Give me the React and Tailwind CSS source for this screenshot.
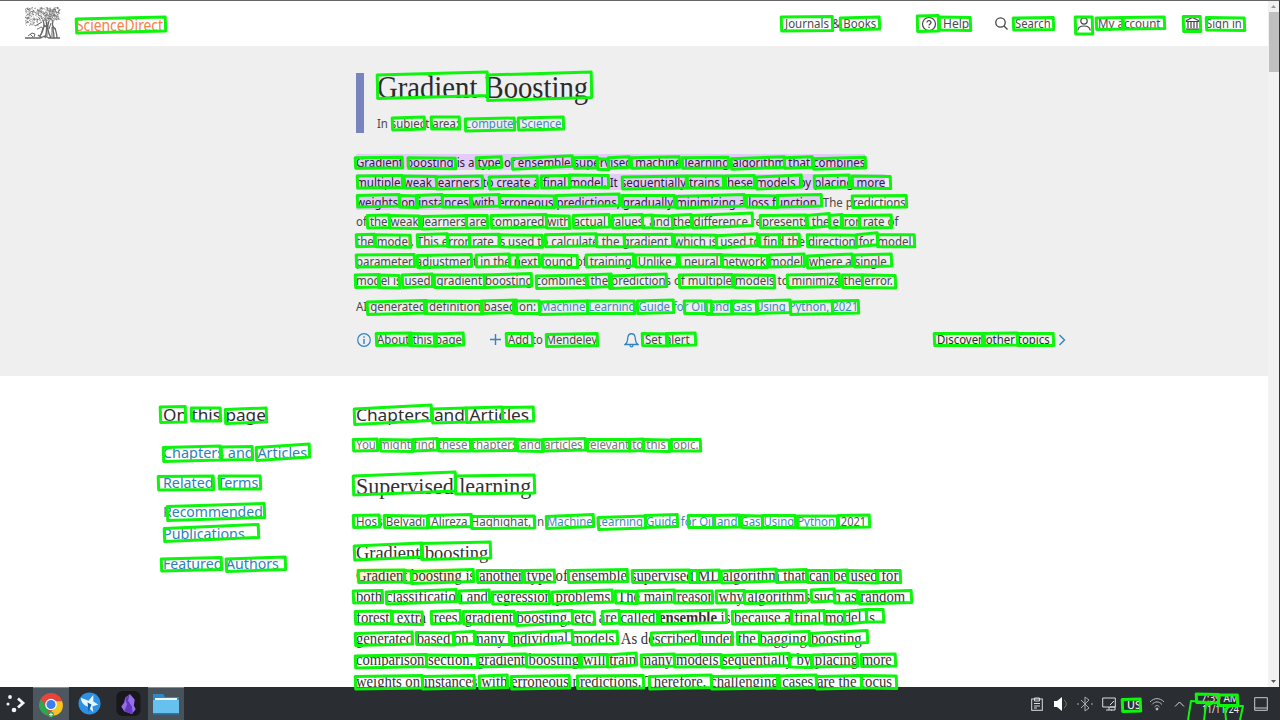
import React, { useLayoutEffect, useRef, useState } from "react";

const SANS = "font-['Noto_Sans','Open_Sans',sans-serif]";
const SERIF = "font-['Liberation_Serif',serif]";

// Text set to an exact measure: the natural width is read, then condensed or expanded.
function Fit({ w, className = "", children }) {
  const ref = useRef(null);
  const [k, setK] = useState(1);
  useLayoutEffect(() => {
    setK(w / ref.current.offsetWidth);
  }, [w]);
  return (
    <span className={"flex shrink-0 items-center whitespace-nowrap " + className} style={{ width: w }}>
      <span ref={ref} className="block shrink-0 origin-left whitespace-pre" style={{ transform: `scaleX(${k})` }}>
        {children}
      </span>
    </span>
  );
}

// Word frames: [left, right, top-left y, height, rise towards the right]
const row = (y, h, list) =>
  list.map(([a, b, dy = 0, t], i) => [a, b, y + dy, h, t === undefined ? [0.5, -0.5, 1, 0][i % 4] : t]);

const FRAMES = [
  [77, 166, 19, 14, 2],
  [782, 833, 17, 14, 0.5], [841, 880, 18, 12, 1], [918, 939, 16, 15.5, 0.5], [940, 971, 17, 13, -0.5],
  [1014, 1054, 18, 12, 0.5], [1076, 1093, 17, 17, 0], [1097, 1124, 18, 11.5, 0.5], [1123, 1165, 17.5, 11.5, 0.5],
  [1184, 1201, 16.5, 15, 0], [1207, 1245, 17.5, 12.5, -0.5],
  [378, 488, 75, 23.5, 3], [488, 592, 75, 25.5, 3],
  [393, 425, 118, 12, 1], [432, 460, 117, 12, 0], [466, 515, 119, 12, 1], [519, 564, 118, 12, 1],
  ...row(157.7, 10.5, [[356, 403], [409, 456], [477, 502], [513, 573, 1, 3], [575, 598], [598, 609, 1], [609, 630], [632, 680, 0, 1], [683, 729], [732, 785, 1, 2], [785, 813], [814, 866, 1, 1.5]]),
  ...row(176, 12, [[358, 403], [405, 437], [437, 483, 1, 1], [490, 538, 1, 1], [542, 570], [570, 609, -1], [623, 687, 1, 1], [688, 724], [726, 755], [757, 802, 1, 2], [815, 850, 0, 1], [853, 891, 0, -0.5]]),
  ...row(195.5, 11.5, [[358, 400, 0, 1], [400, 418], [417, 443], [443, 471], [472, 500, 0, 1], [500, 555], [557, 620, 0, 1.5], [623, 675], [677, 745, 1, 2], [747, 778], [778, 822], [853, 907, 0.5, 0.5]]),
  ...row(215.5, 12.5, [[368, 390], [390, 420], [422, 467, 1, 1], [467, 488], [492, 547, 0, 1], [547, 570], [574, 610], [613, 643, 0, 1], [643, 653], [653, 673], [673, 692], [693, 753, 0, 2.5], [761, 807], [808, 830, 0, 2], [830, 843], [842, 860], [860, 892]]),
  ...row(234.8, 12, [[357, 375], [376, 411, 0, -0.5], [418, 448], [448, 470], [470, 500], [500, 543], [546, 597], [597, 625], [625, 673], [675, 717], [717, 758, 1, 2], [760, 780], [780, 800], [808, 857], [857, 878, 0, 2], [878, 915]]),
  ...row(255, 12, [[357, 415], [418, 472, 0.5, 1], [477, 510], [510, 518], [518, 540], [543, 578], [587, 634, 0, 1], [636, 678], [680, 722], [723, 768], [770, 805], [808, 853, 1, 2], [855, 892, 0, 1]]),
  ...row(275, 12.5, [[356, 380], [379, 400], [403, 433], [435, 485], [485, 532, 0, 1.5], [537, 587, 1, 1], [588, 612], [610, 667, 1, 2], [680, 733], [735, 775], [788, 840, 0, 1], [843, 863], [863, 896, 0, -0.5]]),
  ...row(301, 12.5, [[368, 427, 1, 1.5], [425, 483], [482, 517], [514, 540], [540, 588, 1, 1], [588, 635, 0, 0], [638, 674], [685, 712], [707, 733, 1], [732, 758], [757, 791], [791, 833, 1, 1], [833, 859]]),
  ...row(333.5, 12, [[377, 412], [410, 437], [435, 464, 0.5], [507, 533], [547, 598, 1, 1], [643, 668], [667, 696, 0, 0.5], [935, 985, 0, 0], [983, 1018], [1018, 1054, 0, 0]]),
  [161, 186, 407, 15.5, 0.5], [192, 221, 408, 13, 0], [226, 267, 409.5, 14, 1.5],
  [164, 221, 447.5, 14, 1.5], [222, 253, 447, 13, 0.5], [257, 310, 447.5, 13, 3.5],
  [159, 214, 476.5, 13.5, 0.5], [220, 261, 476, 13, 0],
  [168, 265, 506.5, 14, 3], [165, 259, 528.5, 13, 4],
  [162, 222, 559, 12, 1.5], [227, 286, 559, 12.5, 2],
  [355, 432, 409, 15.5, 4], [433, 467, 409, 14, 1], [467, 503, 408, 14.5, 1], [503, 534, 407.5, 14, 0.5],
  ...row(439.5, 11.5, [[354, 378, 0, 0.5], [381, 413], [414, 438], [439, 471], [473, 516], [518, 543], [544, 586], [588, 630], [630, 644], [644, 670], [672, 701, 0, 0]]),
  [354, 456, 476, 19, 4], [456, 535, 476, 18, 1],
  ...row(515.5, 12, [[354, 380], [385, 428], [429, 472], [472, 535, 1, 0.5], [547, 594, 1, 2], [599, 646, 2, 1.5], [646, 678], [689, 715], [715, 740], [742, 763], [763, 796, 0, 0], [798, 838, 0.5], [839, 870, 0, 0.5]]),
  [355, 423, 546, 14, 3], [422, 491, 543.5, 16, 1.5],
  ...row(570.5, 12, [[359, 405], [405, 412], [412, 474, 1, 2], [478, 523], [525, 555], [569, 628, 0, 1], [633, 690, 0, 0.5], [690, 698], [698, 720], [722, 777, 0.5, 2], [777, 807], [808, 832], [832, 848], [848, 878], [878, 901, 0, 0]]),
  ...row(591, 12, [[354, 383], [387, 457, 1, 2.5], [460, 490], [493, 550, 1, 0.5], [553, 613, 1, 2], [616, 637], [638, 675], [675, 713], [717, 745], [745, 807, 0.5, 1], [812, 835, -1], [835, 858], [860, 912, 1, 1.5]]),
  ...row(611.5, 12.5, [[356, 392], [393, 423], [432, 461], [464, 515], [517, 573, 1.5, 2.5], [573, 595], [603, 620, 0, 1], [620, 658], [660, 727, 0, 1.5], [733, 792, 0, 1], [792, 825], [825, 845], [845, 867, 0, 2], [867, 884, -2, 0]]),
  ...row(632.5, 12, [[356, 413, 1, 1.5], [417, 455], [454, 475], [476, 510], [512, 573, 1, 3], [573, 618, 0, 1], [652, 700, 0.5, 1.5], [700, 733], [738, 760], [760, 810, 0.5, 1.5], [810, 868, 1, 3]]),
  ...row(655, 12, [[356, 427, 1, 1.5], [427, 478], [478, 527, 0, 1], [527, 582], [580, 608], [608, 637, 0, 2], [642, 675], [675, 722, 0, 0.5], [722, 790, 0.5, 2], [790, 812], [813, 858], [862, 896, -0.5, 0.5]]),
  ...row(676, 12.5, [[356, 423, 0.5, 1], [423, 475, 0.5, 1], [480, 508], [512, 570, 0.5, 1], [578, 644, 0, 0.5], [650, 712, 0.5, 1.5], [712, 780, 0.5, 1], [778, 817, 0, 1], [817, 862, 0.5, 1], [862, 897, -0.5, -0.5]]),
  [1123, 1141, 699.5, 12, 0.5], [1197, 1219, 694, 8.5, -0.5], [1219, 1238, 695, 10.5, 0],
];

function Frames() {
  return (
    <svg className="pointer-events-none absolute inset-0" width="1280" height="720" fill="none" stroke="#0df50d" strokeWidth="3" strokeLinejoin="round">
      <g transform="translate(-0.8 0)">
        {FRAMES.map(([a, b, y, h, t], i) => (
          <polygon key={i} points={`${a},${y} ${b},${y - t} ${b + 0.5},${y + h - t} ${a + 0.5},${y + h}`} />
        ))}
      </g>
      <path strokeWidth="2" d="M1188 720L1191 701L1206 702M1204 720L1206 705L1212 704M1226 720L1225 709L1231 706L1243 706L1240 720" />
    </svg>
  );
}

// Engraved tree: short hatching strokes scattered by a fixed sequence
function TreeLogo() {
  let s = 7;
  const r = () => (s = (s * 16807) % 2147483647) / 2147483647;
  let leaves = "";
  for (let i = 0; i < 400; i++) {
    const x = r() * 34 + 0.5, y = r() * (x > 14 ? 13 : 18) + 0.5;
    leaves += `M${x.toFixed(1)} ${y.toFixed(1)}l${(r() * 3 - 1.5).toFixed(1)} ${(r() * 3 - 1.5).toFixed(1)}`;
  }
  return (
    <svg width="36" height="33" viewBox="0 0 36 33" fill="none" stroke="#666">
      <path d={leaves} strokeWidth=".7" />
      <path d="M18 13c2 5 1 10-3 16M21 13c1 6 1 12-1 18M24 14c-2 5-2 10 2 17M28 13c-2 7 1 9 1 18M30 21c1 4 2 6 2 10M0 31h15l5-2 4 2h11M13 28l4 3M19 18l4 3M27 18l3 4" strokeWidth="1.3" />
      <path d="M3 29l4-3 3 1-1 3M5 27l3 3M12 22c2 0 3-2 5-2M22 15v14M26 16l-2 6M10 19l7-4M27 20v10M18 20l-2 8" strokeWidth="1" />
    </svg>
  );
}

const P = "bg-[#e3ccf8] inline-block leading-[16px] text-[#2e2038]";
const DEFINITION = [
  [509, <span className={P}>Gradient boosting is a type of ensemble supervised machine learning algorithm that combines</span>],
  [529, <span className={P}>multiple weak learners to create a final model. It sequentially trains these models by placing more</span>],
  [550, <><span className={P}>weights on instances with erroneous predictions, gradually minimizing a loss function.</span> The predictions</>],
  [542, "of the weak learners are compared with actual values, and the difference represents the error rate of"],
  [555, "the model. This error rate is used to calculate the gradient, which is used to find the direction for model"],
  [531, "parameter adjustment in the next round of training. Unlike a neural network model, where a single"],
  [537, "model is used, gradient boosting combines the predictions of multiple models to minimize the error."],
];
const ARTICLE = [
  [542, <><span className="inline-block bg-[#fff5cf] leading-[16px]">Gradient boosting</span> is another type of ensemble supervised ML algorithm that can be used for</>],
  [549, "both classification and regression problems. The main reason why algorithms such as random"],
  [519, <>forest, extra trees, gradient boosting, etc. are called <b>ensemble</b> is because a final model is</>],
  [506, "generated based on many individual models. As described under the bagging/boosting"],
  [536, "comparison section, gradient boosting will train many models sequentially by placing more"],
  [536, "weights on instances with erroneous predictions. Therefore, challenging cases are the focus"],
];

function NavItem({ w, children, icon, className = "" }) {
  return (
    <div className={"flex items-center " + className}>
      {icon}
      <Fit w={w} className="pt-px">{children}</Fit>
    </div>
  );
}

function Header() {
  return (
    <header className="flex h-[46px] items-center border-t border-[#666] bg-white pl-[25px] text-[12.5px] text-[#4a4a4a]">
      <TreeLogo />
      <Fit w={87} className="ml-[15px] mt-[3px] text-[16.5px] text-[#f58045]">ScienceDirect</Fit>
      <nav className="ml-[622px] flex items-center">
        <NavItem w={91}>Journals &amp; Books</NavItem>
        <NavItem w={26} className="ml-[45px]" icon={
          <svg className="mr-[6px]" width="16" height="16" viewBox="0 0 16 16" fill="none" stroke="#444" strokeWidth="1.2"><circle cx="8" cy="8" r="6.5" /><path d="M5.9 6.6c0-2.7 4.2-2.5 4.1 0 0 1.3-2 1.4-2 3M8 10.8v1.2" /></svg>
        }>Help</NavItem>
        <NavItem w={36} className="ml-[25px]" icon={
          <svg className="mr-[6px]" width="15" height="15" viewBox="0 0 15 15" fill="none" stroke="#444" strokeWidth="1.3"><circle cx="6.5" cy="6.5" r="4.7" /><path d="M10 10l3.5 3.5" /></svg>
        }>Search</NavItem>
        <NavItem w={63} className="ml-[25px]" icon={
          <svg className="mr-[6px]" width="16" height="16" viewBox="0 0 16 16" fill="none" stroke="#444" strokeWidth="1.2"><circle cx="8" cy="5" r="3.2" /><path d="M1.8 14.5c.5-6 11.9-6 12.4 0" /></svg>
        }>My account</NavItem>
        <NavItem w={36} className="ml-[24px]" icon={
          <svg className="mr-[6px]" width="15" height="15" viewBox="0 0 15 15" fill="none" stroke="#444" strokeWidth="1.2"><path d="M1.5 4.5L7.5 1.5l6 3v1h-12zM3 6v6M6 6v6M9 6v6M12 6v6M1 13.2h13" /></svg>
        }>Sign in</NavItem>
      </nav>
    </header>
  );
}

function Hero() {
  return (
    <section className="h-[330px] bg-[#efefef] pl-[356px] pt-[27px] text-[#484848]">
      <div className="h-[60px] border-l-[8px] border-[#7884bd] pl-[13px]">
        <Fit w={211} className={"h-[29px] text-[31px] leading-[29px] text-[#2b2b2b] " + SERIF}>Gradient Boosting</Fit>
        <div className="mt-[13px] flex h-[18px] items-center text-[12.5px]">
          <Fit w={82}>In subject area:</Fit>
          <Fit w={97} className="ml-[5px] text-[#3f86bd]">Computer Science</Fit>
        </div>
      </div>
      <div className="mt-[20px] text-[12.7px]">
        {DEFINITION.map(([w, t], i) => <Fit key={i} w={w} className="h-[19.67px]">{t}</Fit>)}
      </div>
      <div className="mt-[6.3px] flex h-[20px] items-center text-[12.5px]">
        <Fit w={180}>AI generated definition based on:</Fit>
        <Fit w={318} className="ml-[4px] text-[#3f86bd]">Machine Learning Guide for Oil and Gas Using Python, 2021</Fit>
      </div>
      <div className="mt-[13px] flex h-[20px] items-center text-[12.5px]">
        <svg width="16" height="16" viewBox="0 0 16 16" fill="none" stroke="#3184c0" strokeWidth="1.2"><circle cx="8" cy="8" r="6.3" /><path d="M8 4.2v1.5M8 7v5" strokeWidth="1.4" /></svg>
        <Fit w={85} className="ml-[5px]">About this page</Fit>
        <svg className="ml-[27px]" width="13" height="13" viewBox="0 0 13 13" stroke="#3184c0" strokeWidth="1.4"><path d="M6.5 1v11M1 6.5h11" /></svg>
        <Fit w={89} className="ml-[6px]">Add to Mendeley</Fit>
        <svg className="ml-[27px]" width="15" height="16" viewBox="0 0 15 16" fill="none" stroke="#3184c0" strokeWidth="1.3"><path d="M1 12.5c3-2 2.5-4 2.8-7C4.5.5 10.5.5 11.2 5.5c.3 3-.2 5 2.8 7zM6 13c0 2.500 3 2.500 3 0" /></svg>
        <Fit w={45} className="ml-[6px]">Set alert</Fit>
        <Fit w={113} className="ml-[247px] text-[#2d2d2d]">Discover other topics</Fit>
        <svg className="ml-[8px]" width="9" height="14" viewBox="0 0 9 14" fill="none" stroke="#3184c0" strokeWidth="1.4"><path d="M1.5 2l5 5-5 5" /></svg>
      </div>
    </section>
  );
}

function Sidebar() {
  return (
    <aside className="w-[193px] shrink-0 text-[15px] text-[#2e7fb8]">
      <Fit w={103} className="mt-[28px] h-[22px] text-[17px] text-[#2e2e2e]">On this page</Fit>
      <Fit w={144} className="mt-[15px] h-[22px]">Chapters and Articles</Fit>
      <Fit w={95} className="mt-[8px] h-[22px]">Related Terms</Fit>
      <Fit w={100} className="mt-[7px] h-[22px]">Recommended</Fit>
      <Fit w={82} className="h-[22px]">Publications</Fit>
      <Fit w={116} className="mt-[8px] h-[22px]">Featured Authors</Fit>
    </aside>
  );
}

function Articles() {
  return (
    <main className="text-[#333]">
      <Fit w={173} className="mt-[28px] h-[22px] text-[17px] text-[#2e2e2e]">Chapters and Articles</Fit>
      <Fit w={343} className="mt-[9px] h-[20px] text-[12.5px] text-[#757575]">You might find these chapters and articles relevant to this topic.</Fit>
      <Fit w={175} className={"mt-[17px] h-[28px] text-[24px] " + SERIF}>Supervised learning</Fit>
      <div className="mt-[12px] flex h-[20px] items-center text-[12.5px]">
        <Fit w={188} className="text-[#505050]">Hoss Belyadi, Alireza Haghighat, in</Fit>
        <Fit w={288} className="ml-[3px] text-[#3f86bd]">Machine Learning Guide for Oil and Gas Using Python</Fit>
        <Fit w={31} className="text-[#505050]">, 2021</Fit>
      </div>
      <Fit w={132} className={"mt-[9px] h-[24px] text-[19.5px] " + SERIF}>Gradient boosting</Fit>
      <div className={"text-[16px] " + SERIF}>
        {ARTICLE.map(([w, t], i) => <Fit key={i} w={w} className="h-[21.2px]">{t}</Fit>)}
      </div>
    </main>
  );
}

function ScrollBar() {
  return (
    <div className="flex h-[687px] w-[12px] shrink-0 flex-col items-center border-r border-t border-r-[#333] border-t-[#666] bg-[#f2f2f2]">
      <svg width="9" height="11" viewBox="0 0 9 11"><path d="M2 7l2.500-3 2.500 3z" fill="#999" /></svg>
      <div className="h-[60px] w-[10px] bg-[#bfbfbf]" />
      <svg className="mt-auto" width="9" height="11" viewBox="0 0 9 11"><path d="M2 4l2.500 3L7 4z" fill="#555" /></svg>
    </div>
  );
}

const tile = "flex h-[33px] w-[36px] items-center justify-center ";
function TaskBar() {
  return (
    <footer className="flex h-[33px] items-center bg-[#2a2d32] text-[#eee]">
      <svg className="ml-[4px] mr-[5px]" width="24" height="24" viewBox="0 0 24 24" fill="#f5f5f5"><circle cx="6" cy="5" r="1.900" /><circle cx="4" cy="12" r="1.500" /><circle cx="10" cy="18" r="2.300" /><path d="M14 6.500l5 4.500-5 4.500" fill="none" stroke="#f5f5f5" strokeWidth="2.800" /></svg>
      <div className={tile + "border-t border-[#4c9ec6] bg-[#4d575f]"}>
        <svg width="26" height="27" viewBox="0 0 27 27"><circle cx="13.5" cy="13.5" r="12" fill="#e7453b" /><path d="M3 8l8 12-1 5C1 22-1 14 3 8z" fill="#2da650" /><path d="M25 10H14l3 7-6 8c12 2 17-7 14-15z" fill="#f9c51e" /><circle cx="13.5" cy="13.5" r="6" fill="#fff" /><circle cx="13.5" cy="13.5" r="4.7" fill="#3a7ef0" /><circle cx="13.5" cy="24" r="3" fill="#27a84b" /><path d="M11.500 24h4M13.500 22v4" stroke="#fff" /></svg>
      </div>
      <div className="flex h-[33px] w-[41px] items-center justify-center">
        <svg width="23" height="23" viewBox="0 0 24 24"><circle cx="12" cy="12" r="11.500" fill="#2b91e5" /><path d="M3 6l8 3 5-6v7l5 3-6 2 1 6-6-6c-4-1-7-5-7-9z" fill="#e6f6ff" /><path d="M10 11l4 2-3 8z" fill="#155eab" /></svg>
      </div>
      <div className="flex h-[33px] w-[36px] items-center justify-center">
        <svg width="25" height="25" viewBox="0 0 25 26"><rect width="25" height="26" rx="6" fill="#18171c" /><path d="M14 3l5 6-1 6 2 4-4 5-8-3-3-5 3-4 1-5z" fill="#9670ec" /><path d="M14 3l-2 7 4 6 1 8-9-3 3-7-2-6z" fill="#6539be" /></svg>
      </div>
      <div className={tile + "ml-[2px] border-t border-[#4c9ec6] bg-[#48525a]"}>
        <svg width="26" height="22" viewBox="0 0 26 22"><path d="M0 1h10l2 3h14v17H0z" fill="#3389c8" /><path d="M2 5h22v3H2z" fill="#edf8fc" /><path d="M0 7h26v14H0z" fill="#67c1ee" /><path d="M0 20h26v1.500H0z" fill="#247ab5" /></svg>
      </div>
      <div className="ml-auto flex items-center">
        <svg width="12" height="14" viewBox="0 0 12 14" fill="none" stroke="#ddd"><rect x=".7" y="2" width="10.6" height="11.3" /><path d="M3.500 1h5v3h-5zM3 6.500h6M3 9h6M3 11h3" /></svg>
        <svg className="ml-[11px]" width="14" height="16" viewBox="0 0 14 16"><path d="M0 5h3l5-4v14l-5-4H0z" fill="#fff" /><path d="M10 4c3 2 3 6 0 8" fill="none" stroke="#777" /></svg>
        <svg className="ml-[8px]" width="18" height="16" viewBox="0 0 18 16" fill="none" stroke="#aaa"><path d="M5 4l8 8-4 3V1l4 3-8 8M1 8h2M15 8h2" /></svg>
        <svg className="ml-[8px]" width="14" height="14" viewBox="0 0 14 14" fill="none" stroke="#ddd"><path d="M.7 1h12.600v9H.7zM4 13h6M7 10v3M8 8l4-4" /><path d="M8 10h5v3H9" /></svg>
        <Fit w={14} className="ml-[11px] mt-[2px] text-[11.5px] font-medium">US</Fit>
        <svg className="ml-[8px]" width="16" height="14" viewBox="0 0 16 14" fill="none" stroke="#bbb"><path d="M1 5c4-4.500 10-4.500 14 0M3 7.500c3-3.500 7-3.500 10 0M5.500 10c2-2 3-2 5 0" /><circle cx="8" cy="12" r="1" fill="#ddd" /></svg>
        <svg className="ml-[9px]" width="11" height="10" viewBox="0 0 11 10" fill="none" stroke="#ddd"><path d="M1 7.500l4.500-4.500L10 7.500" /></svg>
        <div className="ml-[14px] flex w-[42px] flex-col items-center text-[10px] leading-[10.5px]">
          <Fit w={38} className="h-[10.5px]">7:39 AM</Fit>
          <Fit w={37} className="h-[10.5px]">11/11/24</Fit>
        </div>
        <svg className="ml-[13px] mr-[12px]" width="14" height="14" viewBox="0 0 14 14" fill="none" stroke="#ccc"><path d="M.7.7h12.600v12.600H.7zM1 11h12" /></svg>
      </div>
    </footer>
  );
}

export default function App() {
  return (
    <div className={"relative h-[720px] w-[1280px] overflow-hidden bg-white " + SANS}>
      <div className="flex h-[687px] overflow-hidden">
        <div className="h-[687px] w-[1268px] shrink-0 overflow-hidden">
          <Header />
          <Hero />
          <div className="flex pl-[163px]">
            <Sidebar />
            <Articles />
          </div>
        </div>
        <ScrollBar />
      </div>
      <TaskBar />
      <Frames />
    </div>
  );
}
